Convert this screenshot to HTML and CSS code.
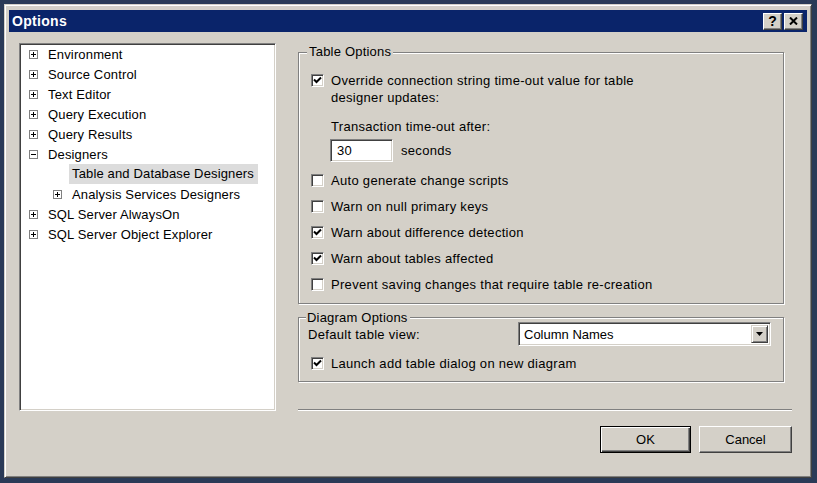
FILE: index.html
```html
<!DOCTYPE html>
<html>
<head>
<meta charset="utf-8">
<link rel="stylesheet" href="styles.css">
</head>
<body>
<div class="window">
  <div class="titlebar">
    <span class="title">Options</span>
    <div class="tbtns">
      <span class="tbtn">?</span>
      <span class="tbtn tbx"><svg width="9" height="8" viewBox="0 0 9 8"><path d="M1 0.5 L8 7.5 M8 0.5 L1 7.5" stroke="#000" stroke-width="2"/></svg></span>
    </div>
  </div>
  <div class="content">
    <div class="tree">
      <div class="row"><span class="exp plus"></span><span>Environment</span></div>
      <div class="row"><span class="exp plus"></span><span>Source Control</span></div>
      <div class="row"><span class="exp plus"></span><span>Text Editor</span></div>
      <div class="row"><span class="exp plus"></span><span>Query Execution</span></div>
      <div class="row"><span class="exp plus"></span><span>Query Results</span></div>
      <div class="row"><span class="exp minus"></span><span>Designers</span></div>
      <div class="row child"><span class="sel">Table and Database Designers</span></div>
      <div class="row child"><span class="exp plus"></span><span>Analysis Services Designers</span></div>
      <div class="row"><span class="exp plus"></span><span>SQL Server AlwaysOn</span></div>
      <div class="row"><span class="exp plus"></span><span>SQL Server Object Explorer</span></div>
    </div>
    <div class="right">
      <div class="group g1">
        <span class="glabel">Table Options</span>
        <div class="crow multi">
          <span class="cb checked"><svg width="9" height="9" viewBox="0 0 9 9"><path d="M1 3.5 L3.5 6 L8 1.5" fill="none" stroke="#000" stroke-width="2"/></svg></span>
          <span class="ctext">Override connection string time-out value for table<br>designer updates:</span>
        </div>
        <div class="sub">Transaction time-out after:</div>
        <div class="timeout">
          <span class="textbox">30</span>
          <span>seconds</span>
        </div>
        <div class="crow"><span class="cb"></span><span class="ctext">Auto generate change scripts</span></div>
        <div class="crow"><span class="cb"></span><span class="ctext">Warn on null primary keys</span></div>
        <div class="crow"><span class="cb checked"><svg width="9" height="9" viewBox="0 0 9 9"><path d="M1 3.5 L3.5 6 L8 1.5" fill="none" stroke="#000" stroke-width="2"/></svg></span><span class="ctext">Warn about difference detection</span></div>
        <div class="crow"><span class="cb checked"><svg width="9" height="9" viewBox="0 0 9 9"><path d="M1 3.5 L3.5 6 L8 1.5" fill="none" stroke="#000" stroke-width="2"/></svg></span><span class="ctext">Warn about tables affected</span></div>
        <div class="crow"><span class="cb"></span><span class="ctext">Prevent saving changes that require table re-creation</span></div>
      </div>
      <div class="group g2">
        <span class="glabel">Diagram Options</span>
        <div class="viewrow">
          <span class="vlabel">Default table view:</span>
          <div class="combo">
            <span class="cval">Column Names</span>
            <span class="arrow"><svg width="7" height="4" viewBox="0 0 7 4"><path d="M0 0 H7 L3.5 4 Z" fill="#000"/></svg></span>
          </div>
        </div>
        <div class="crow"><span class="cb checked"><svg width="9" height="9" viewBox="0 0 9 9"><path d="M1 3.5 L3.5 6 L8 1.5" fill="none" stroke="#000" stroke-width="2"/></svg></span><span class="ctext">Launch add table dialog on new diagram</span></div>
      </div>
      <div class="sep"></div>
      <div class="buttons">
        <span class="btn default"><span class="inner">OK</span></span>
        <span class="btn"><span class="inner">Cancel</span></span>
      </div>
    </div>
  </div>
</div>
</body>
</html>
```
FILE: styles.css
```css
html, body {
  margin: 0;
  padding: 0;
}
body {
  background: #2a3a57;
  width: 817px;
  height: 483px;
  overflow: hidden;
  font-family: "Liberation Sans", Arial, sans-serif;
  font-size: 13px;
  color: #000;
  padding: 4px 0 0 4px;
  box-sizing: border-box;
}
.window {
  width: 808px;
  height: 474px;
  box-sizing: border-box;
  background: #d4d0c8;
  border-top: 1px solid #d4d0c8;
  border-left: 1px solid #d4d0c8;
  border-right: 1px solid #404040;
  border-bottom: 1px solid #404040;
  box-shadow: inset 1px 1px 0 #fff, inset -1px -1px 0 #808080;
  padding: 5px 4px 4px 4px;
  display: flex;
  flex-direction: column;
}
.titlebar {
  height: 22px;
  background: #0a246a;
  display: flex;
  align-items: center;
  justify-content: space-between;
  padding: 0 4px 0 3px;
}
.title {
  color: #fff;
  font-weight: bold;
  font-size: 14px;
  letter-spacing: 0.3px;
}
.tbtns {
  display: flex;
  gap: 2px;
}
.tbtn {
  width: 19px;
  height: 17px;
  box-sizing: border-box;
  background: #d4d0c8;
  border-top: 1px solid #fff;
  border-left: 1px solid #fff;
  border-right: 1px solid #404040;
  border-bottom: 1px solid #404040;
  box-shadow: inset -1px -1px 0 #808080;
  display: flex;
  align-items: center;
  justify-content: center;
  font-weight: bold;
  font-size: 14px;
  line-height: 1;
}
.content {
  display: flex;
  padding: 11px 0 0 10px;
  gap: 22px;
}
.tree {
  width: 257px;
  height: 368px;
  box-sizing: border-box;
  background: #fff;
  border-top: 1px solid #808080;
  border-left: 1px solid #808080;
  border-right: 1px solid #fff;
  border-bottom: 1px solid #fff;
  box-shadow: inset 1px 1px 0 #404040, inset -1px -1px 0 #d4d0c8;
  padding: 0 0 0 9px;
  letter-spacing: 0.15px;
}
.row {
  height: 20px;
  display: flex;
  align-items: center;
  white-space: nowrap;
}
.row.child {
  padding-left: 24px;
}
.exp {
  width: 9px;
  height: 9px;
  box-sizing: border-box;
  border: 1px solid #808080;
  background: #fff;
  position: relative;
  margin-right: 10px;
  flex: none;
}
.exp::before {
  content: "";
  position: absolute;
  left: 1px;
  top: 3px;
  width: 5px;
  height: 1px;
  background: #000;
}
.exp.plus::after {
  content: "";
  position: absolute;
  left: 3px;
  top: 1px;
  width: 1px;
  height: 5px;
  background: #000;
}
.sel {
  background: #dcdcdc;
  height: 20px;
  line-height: 20px;
  padding: 0 4px 0 3px;
  margin-left: 16px;
}
.right {
  width: 494px;
  display: flex;
  flex-direction: column;
  letter-spacing: 0.3px;
}
.group {
  position: relative;
  width: 486px;
  box-sizing: border-box;
  border: 1px solid #808080;
  box-shadow: inset 1px 1px 0 #fff, 1px 1px 0 #fff;
}
.glabel {
  position: absolute;
  top: -9px;
  left: 8px;
  background: #d4d0c8;
  padding: 0 2px;
  line-height: 15px;
  letter-spacing: 0.2px;
}
.g1 {
  margin-top: 9px;
  height: 252px;
  padding: 19px 0 0 12px;
}
.g2 {
  margin-top: 13px;
  height: 65px;
  padding: 4px 0 0 12px;
}
.g2 .glabel {
  top: -8px;
  left: 7px;
  padding: 0 2px 0 1px;
}
.crow {
  display: flex;
  align-items: center;
  height: 26px;
}
.crow.multi {
  align-items: flex-start;
  height: auto;
  line-height: 17px;
}
.crow.multi .cb {
  margin-top: 2px;
}
.cb {
  width: 13px;
  height: 13px;
  box-sizing: border-box;
  background: #fff;
  border-top: 1px solid #808080;
  border-left: 1px solid #808080;
  border-right: 1px solid #fff;
  border-bottom: 1px solid #fff;
  box-shadow: inset 1px 1px 0 #404040, inset -1px -1px 0 #d4d0c8;
  display: flex;
  align-items: center;
  justify-content: center;
  flex: none;
  margin-right: 7px;
}
.cb svg {
  display: block;
}
.ctext {
  white-space: nowrap;
}
.sub {
  margin: 12px 0 0 20px;
  line-height: 17px;
}
.timeout {
  display: flex;
  align-items: center;
  gap: 8px;
  margin: 4px 0 5px 19px;
}
.textbox {
  width: 63px;
  height: 23px;
  box-sizing: border-box;
  background: #fff;
  border-top: 1px solid #808080;
  border-left: 1px solid #808080;
  border-right: 1px solid #fff;
  border-bottom: 1px solid #fff;
  box-shadow: inset 1px 1px 0 #404040, inset -1px -1px 0 #d4d0c8;
  padding: 0 0 0 6px;
  line-height: 21px;
}
.viewrow {
  display: flex;
  align-items: center;
  height: 24px;
  margin-left: -3px;
}
.vlabel {
  width: 210px;
}
.combo {
  width: 253px;
  height: 24px;
  box-sizing: border-box;
  background: #fff;
  border-top: 1px solid #808080;
  border-left: 1px solid #808080;
  border-right: 1px solid #fff;
  border-bottom: 1px solid #fff;
  box-shadow: inset 1px 1px 0 #404040, inset -1px -1px 0 #d4d0c8;
  display: flex;
  align-items: center;
  justify-content: space-between;
  padding: 2px;
  letter-spacing: 0;
}
.cval {
  padding-left: 3px;
}
.arrow {
  width: 17px;
  height: 18px;
  box-sizing: border-box;
  background: #d4d0c8;
  border-top: 1px solid #d4d0c8;
  border-left: 1px solid #d4d0c8;
  border-right: 1px solid #404040;
  border-bottom: 1px solid #404040;
  box-shadow: inset 1px 1px 0 #fff, inset -1px -1px 0 #808080;
  display: flex;
  align-items: center;
  justify-content: center;
}
.arrow svg { display: block; }
.g2 .crow {
  margin-top: 4px;
}
.sep {
  margin-top: 27px;
  height: 0;
  border-top: 1px solid #808080;
  border-bottom: 1px solid #fff;
}
.buttons {
  display: flex;
  justify-content: flex-end;
  gap: 8px;
  margin-top: 15px;
  letter-spacing: 0;
}
.btn {
  width: 93px;
  height: 27px;
  box-sizing: border-box;
  background: #d4d0c8;
  border-top: 1px solid #fff;
  border-left: 1px solid #fff;
  border-right: 1px solid #404040;
  border-bottom: 1px solid #404040;
  box-shadow: inset -1px -1px 0 #808080;
  display: flex;
  align-items: center;
  justify-content: center;
}
.btn.default {
  width: 91px;
  border: 1px solid #000;
  box-shadow: inset 1px 1px 0 #fff, inset -1px -1px 0 #404040, inset -2px -2px 0 #808080;
}
```
